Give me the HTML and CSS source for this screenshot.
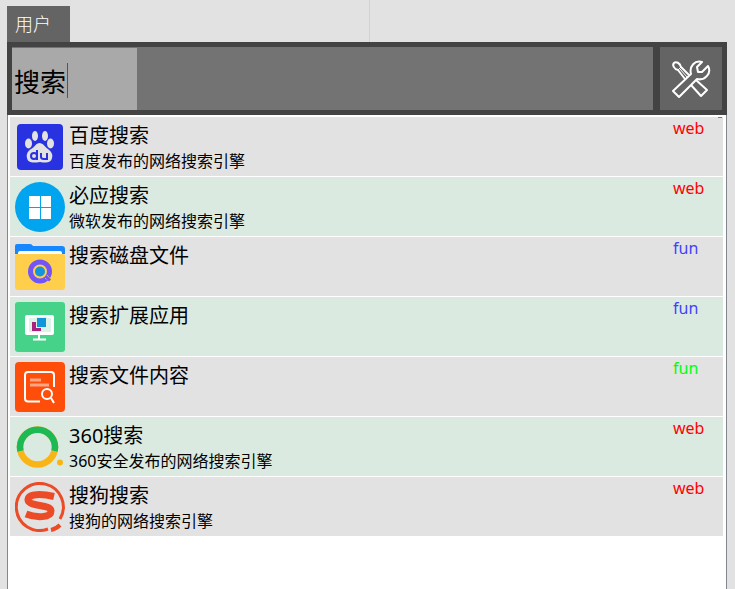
FILE: index.html
```html
<!DOCTYPE html>
<html lang="zh-CN">
<head>
  <meta charset="UTF-8" />
  <meta name="viewport" content="width=device-width, initial-scale=1.0" />
  <title>搜索</title>
  <link rel="stylesheet" href="styles.css">
</head>
<body>
  <header class="topbar">
    <div class="tab">用户</div>
  </header>

  <form class="searchbar">
    <div class="field">
      <input class="query" type="text" value="搜索" aria-label="搜索">
      <span class="caret"></span>
    </div>
    <button class="tools" type="button" aria-label="设置">
      <svg viewBox="0 0 40 40" width="40" height="40" fill="none" stroke="#fff" stroke-width="2" stroke-linejoin="round">
        <path d="M2 32 L20 15 C18 7 24 1 31 3 L26 8 L27 13 L31 13 L37 7 C41 14 34 22 26 20 L8 38 Z" />
        <path d="M14 20 L7 11 C3 10 1 6 3 4 C5 2 9 4 10 8 L18 16" />
        <path d="M7 11 L10 8 M9 10 L16 18" stroke-width="1" />
        <path d="M20 26 L30 37 L36 31 L25 21" />
      </svg>
    </button>
  </form>

  <main class="panel">
    <span class="scroll-mark"></span>
    <ul class="results">
      <li class="row">
        <svg class="icon" viewBox="0 0 50 50">
          <rect x="2" y="2" width="46" height="46" rx="4" fill="#2932e1" />
          <g fill="#e2e2e2">
            <ellipse cx="20" cy="14" rx="3" ry="5" />
            <ellipse cx="30" cy="14" rx="3" ry="5" />
            <ellipse cx="13.500" cy="21.500" rx="3.500" ry="5" />
            <ellipse cx="35.500" cy="21.500" rx="3.500" ry="5" />
            <path d="M24.500 21 C28 21 30 25 33 27 C37 30 38 33 37 36 C36 41 31 41 25 40 C18 41 13 41 12 36 C11 32 13 29 16 27 C20 25 21 21 24.500 21 Z" />
          </g>
          <g fill="none" stroke="#2932e1" stroke-width="2">
            <circle cx="19" cy="34" r="3" />
            <path d="M22 28 V38 M26 31 V35 Q26 37 29 37 H32 V31" />
          </g>
        </svg>
        <div class="info">
          <div class="name">百度搜索</div>
          <div class="desc">百度发布的网络搜索引擎</div>
        </div>
        <span class="tag web">web</span>
      </li>
      <li class="row">
        <svg class="icon" viewBox="0 0 50 50">
          <circle cx="25" cy="25" r="25" fill="#00a4ef" />
          <path fill="#fff" d="M14 14 H25 V25 H14 Z M26 14 H36 V25 H26 Z M14 26 H25 V37 H14 Z M26 26 H36 V37 H26 Z" />
        </svg>
        <div class="info">
          <div class="name">必应搜索</div>
          <div class="desc">微软发布的网络搜索引擎</div>
        </div>
        <span class="tag web">web</span>
      </li>
      <li class="row">
        <svg class="icon" viewBox="0 0 50 50">
          <path fill="#1787ff" d="M0 4 Q0 2 2 2 H15 Q17 2 18 4 H47 Q50 4 50 7 V12 H0 Z" />
          <path fill="#fff" d="M3 14 V11 Q3 9 5 9 H45 Q47 9 47 11 V14 Z" />
          <path fill="#ffcf4b" d="M0 14 Q0 12 2 12 H48 Q50 12 50 14 V45 Q50 48 47 48 H3 Q0 48 0 45 Z" />
          <circle cx="25" cy="29.500" r="9.500" fill="none" stroke="#7355f7" stroke-width="5" />
          <circle cx="25" cy="29.500" r="5" fill="#1296db" />
          <path d="M30 36 L35 39 M32 33 L36 38" stroke="#ffcf4b" stroke-width="1" />
          <path d="M31 34.500 L35 38.500" stroke="#7355f7" stroke-width="3" />
        </svg>
        <div class="info">
          <div class="name">搜索磁盘文件</div>
        </div>
        <span class="tag fun">fun</span>
      </li>
      <li class="row">
        <svg class="icon" viewBox="0 0 50 50">
          <rect width="50" height="50" rx="3" fill="#46d288" />
          <rect x="10" y="13" width="29" height="20" rx="2" fill="#fff" />
          <rect x="14" y="16" width="22" height="14" fill="#daf4e8" />
          <path d="M17 20 H26 V29 H17 Z" fill="#a9227d" />
          <path d="M21 15 H32 V26 H21 Z" fill="#daf4e8" />
          <path d="M22 16 H31 V25 H22 Z" fill="#1296db" />
          <path d="M24 33 V37 M18 37.500 H31" stroke="#fff" stroke-width="2" />
        </svg>
        <div class="info">
          <div class="name">搜索扩展应用</div>
        </div>
        <span class="tag fun">fun</span>
      </li>
      <li class="row">
        <svg class="icon" viewBox="0 0 50 50" fill="none">
          <rect width="50" height="50" rx="4" fill="#ff4d0a" />
          <path d="M25 39.500 H13 Q10 39.500 10 36.500 V13 Q10 10 13 10 H36 Q39 10 39 13 V25" stroke="#fff" stroke-width="2" />
          <path d="M15 18 H26 M15 23 H34" stroke="#ffa685" stroke-width="3" />
          <circle cx="32" cy="32" r="5" stroke="#fff" stroke-width="2" />
          <path d="M36 36 L39 41" stroke="#fff" stroke-width="2" />
        </svg>
        <div class="info">
          <div class="name">搜索文件内容</div>
        </div>
        <span class="tag new">fun</span>
      </li>
      <li class="row">
        <svg class="icon" viewBox="0 0 50 50" fill="none" stroke-width="6.500">
          <circle cx="22.500" cy="25" r="17.500" stroke="#f9b517" />
          <path d="M5.400 29 A17.500 17.500 0 1 1 39.600 29" stroke="#1cb955" />
          <circle cx="45" cy="40.500" r="3" fill="#f9b517" stroke="none" />
        </svg>
        <div class="info">
          <div class="name">360搜索</div>
          <div class="desc">360安全发布的网络搜索引擎</div>
        </div>
        <span class="tag web">web</span>
      </li>
      <li class="row">
        <svg class="icon" viewBox="0 0 50 50" fill="none" stroke="#eb4c27">
          <path d="M33 47 A23.500 23.500 0 1 1 45 37" stroke-width="3" />
          <path d="M36 48 Q41 47 45 43" stroke-width="4" />
          <path d="M39 14.500 C28 12 13 11 13 18 C14 25 36 22 36 29 C36 36 21 36 11 32" stroke-width="7" />
        </svg>
        <div class="info">
          <div class="name">搜狗搜索</div>
          <div class="desc">搜狗的网络搜索引擎</div>
        </div>
        <span class="tag web">web</span>
      </li>
    </ul>
  </main>
</body>
</html>
```
FILE: styles.css
```css
* {
  box-sizing: border-box;
}

body {
  margin: 0;
  padding: 0 8px 0 7px;
  height: 100vh;
  display: flex;
  flex-direction: column;
  overflow: hidden;
  background: #e2e2e2;
  color: #000;
  font-family: "Noto Sans", "Noto Sans CJK SC", sans-serif;
}

.topbar {
  display: flex;
  align-items: flex-end;
  height: 42px;
  /* thin divider in the middle of the title area */
  background: linear-gradient(#d2d2d2, #d2d2d2) 362px 0 / 1px 100% no-repeat;
}

.tab {
  height: 36px;
  padding: 0 19px 0 8px;
  background: #646464;
  color: #fff;
  font-size: 18px;
  font-weight: 300;
  line-height: 36px;
}

.searchbar {
  display: flex;
  gap: 7px;
  padding: 5px;
  background: #434343;
}

.field {
  position: relative;
  flex: 1;
  height: 63px;
  padding-top: 1px;
  background: #737373;
}

.query {
  display: block;
  width: 125px;
  height: 62px;
  padding: 4px 2px 0;
  border: none;
  outline: none;
  border-radius: 0;
  background: #a9a9a9;
  color: #000;
  font: inherit;
  font-size: 26px;
}

.caret {
  position: absolute;
  left: 55px;
  top: 16px;
  width: 1px;
  height: 35px;
  background: #555;
}

.tools {
  display: flex;
  align-items: center;
  justify-content: center;
  width: 62px;
  padding: 0;
  border: none;
  background: #646464;
  cursor: pointer;
}

.panel {
  position: relative;
  flex: 1;
  padding: 2px 3px 0 2px;
  border: 1px solid #828790;
  border-width: 0 1px;
  background: #fff;
}

.scroll-mark {
  position: absolute;
  top: 2px;
  right: 4px;
  width: 4px;
  height: 1px;
  background: #777;
}

.results {
  margin: 0;
  padding: 0;
  list-style: none;
  display: flex;
  flex-direction: column;
  gap: 1px;
}

.row {
  display: flex;
  gap: 4px;
  height: 59px;
  padding: 5px 0 0 5px;
  background: #e2e2e2;
}

.row:nth-child(even) {
  background: #dbeae0;
}

.icon {
  flex: none;
  width: 50px;
  height: 50px;
}

.info {
  flex: 1;
}

.name {
  font-size: 20px;
  line-height: 28px;
}

.desc {
  font-size: 16px;
  line-height: 22px;
}

.tag {
  width: 50px;
  font-size: 16px;
  line-height: 12px;
}

.web {
  color: #f00;
}

.fun {
  color: #4040ff;
}

.new {
  color: #0f0;
}
```
